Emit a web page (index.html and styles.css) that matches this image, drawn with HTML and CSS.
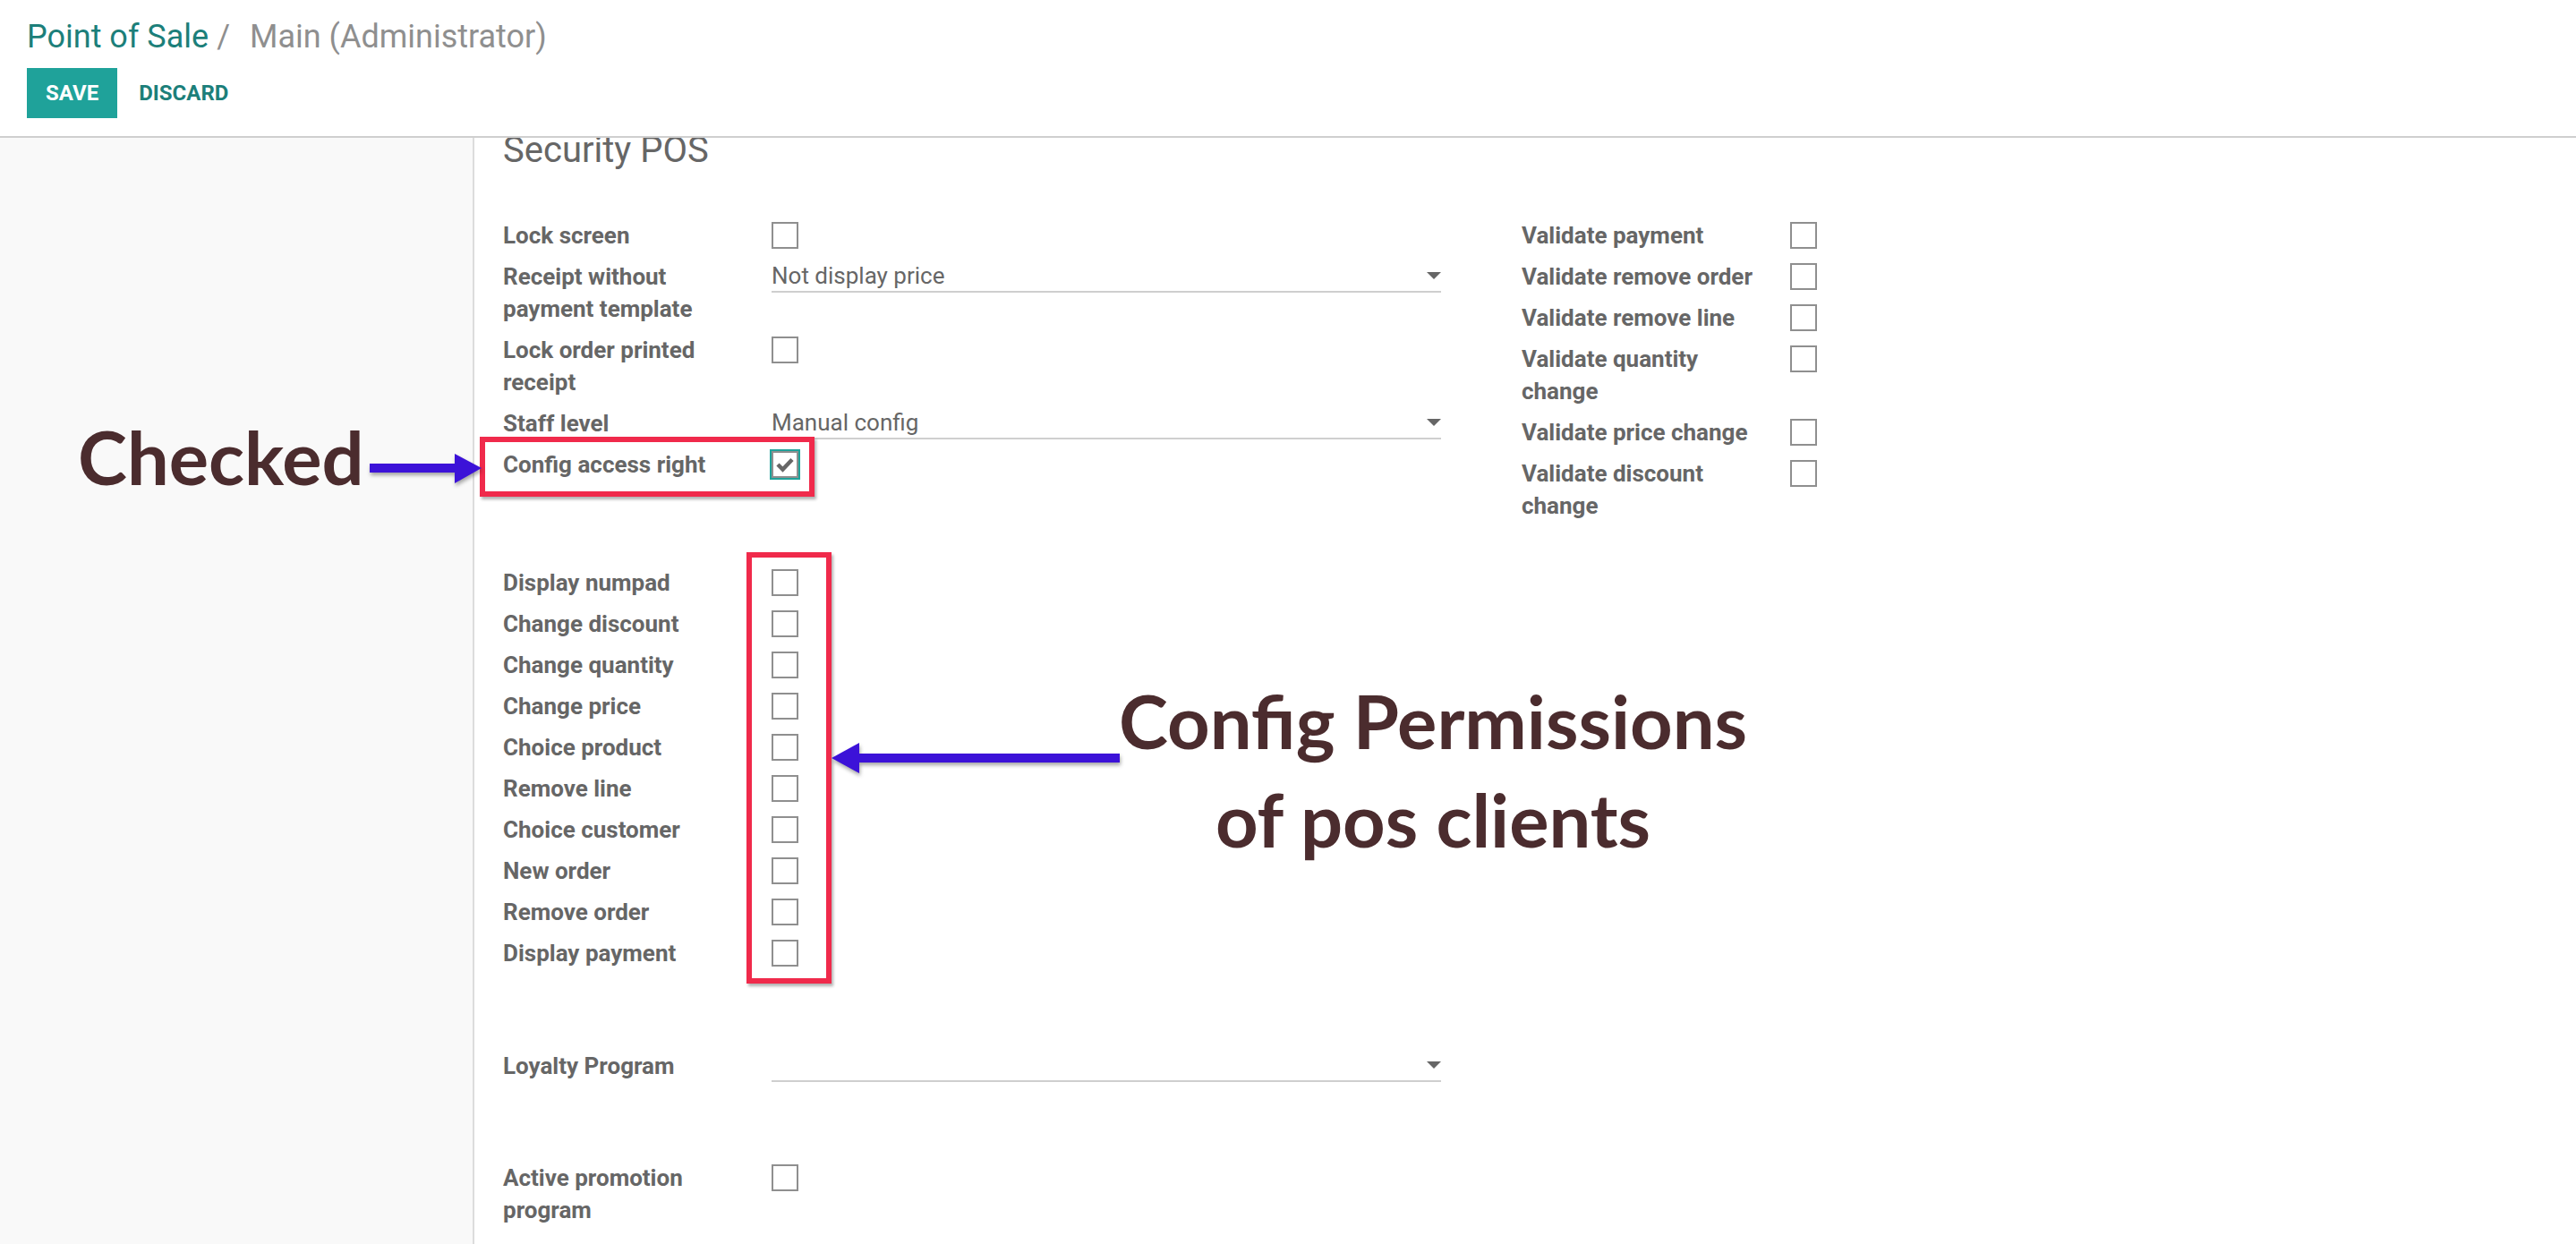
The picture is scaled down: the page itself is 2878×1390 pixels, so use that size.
FILE: index.html
```html
<!DOCTYPE html>
<html lang="en">
<head>
<meta charset="utf-8">
<title>Point of Sale / Main (Administrator)</title>
<link rel="stylesheet" href="styles.css">
</head>
<body>
<div class="page">
  <header class="cp">
    <div class="crumbs"><span class="crumb">Point of Sale</span><span class="sep">/</span><span class="active">Main (Administrator)</span></div>
    <div class="buttons"><button class="btn save">SAVE</button><button class="btn discard">DISCARD</button></div>
  </header>

  <main class="content">
    <div class="gutter"></div>
    <section class="sheet">
      <h2 class="sep-title">Security POS</h2>

      <div class="groups">
        <div class="group">
          <div class="row"><div class="label">Lock screen</div><div class="value"><span class="cb"></span></div></div>
          <div class="row"><div class="label">Receipt without payment template</div><div class="value"><div class="select"><span>Not display price</span><i class="caret"></i></div></div></div>
          <div class="row"><div class="label">Lock order printed receipt</div><div class="value"><span class="cb"></span></div></div>
          <div class="row"><div class="label">Staff level</div><div class="value"><div class="select"><span>Manual config</span><i class="caret"></i></div></div></div>
          <div class="row"><div class="label">Config access right</div><div class="value"><span class="cb checked"><svg viewBox="0 0 26 26" width="26" height="26"><polyline points="5,13 10.5,18.5 21,7.5" fill="none" stroke="#666" stroke-width="4.5"/></svg></span></div></div>
        </div>
        <div class="group">
          <div class="row"><div class="label">Validate payment</div><div class="value"><span class="cb"></span></div></div>
          <div class="row"><div class="label">Validate remove order</div><div class="value"><span class="cb"></span></div></div>
          <div class="row"><div class="label">Validate remove line</div><div class="value"><span class="cb"></span></div></div>
          <div class="row"><div class="label">Validate quantity change</div><div class="value"><span class="cb"></span></div></div>
          <div class="row"><div class="label">Validate price change</div><div class="value"><span class="cb"></span></div></div>
          <div class="row"><div class="label">Validate discount change</div><div class="value"><span class="cb"></span></div></div>
        </div>
      </div>

      <div class="group perms">
        <div class="row"><div class="label">Display numpad</div><div class="value"><span class="cb"></span></div></div>
        <div class="row"><div class="label">Change discount</div><div class="value"><span class="cb"></span></div></div>
        <div class="row"><div class="label">Change quantity</div><div class="value"><span class="cb"></span></div></div>
        <div class="row"><div class="label">Change price</div><div class="value"><span class="cb"></span></div></div>
        <div class="row"><div class="label">Choice product</div><div class="value"><span class="cb"></span></div></div>
        <div class="row"><div class="label">Remove line</div><div class="value"><span class="cb"></span></div></div>
        <div class="row"><div class="label">Choice customer</div><div class="value"><span class="cb"></span></div></div>
        <div class="row"><div class="label">New order</div><div class="value"><span class="cb"></span></div></div>
        <div class="row"><div class="label">Remove order</div><div class="value"><span class="cb"></span></div></div>
        <div class="row"><div class="label">Display payment</div><div class="value"><span class="cb"></span></div></div>
      </div>

      <div class="group loyalty">
        <div class="row"><div class="label">Loyalty Program</div><div class="value"><div class="select"><span></span><i class="caret"></i></div></div></div>
      </div>

      <div class="group promo">
        <div class="row"><div class="label">Active promotion program</div><div class="value"><span class="cb"></span></div></div>
      </div>
    </section>
  </main>

  <div class="note note-checked">Checked</div>
  <div class="note note-perm">Config Permissions<br>of pos clients</div>
  <div class="redbox rb1"></div>
  <div class="redbox rb2"></div>
  <svg class="arrows" width="2878" height="1390" viewBox="0 0 2878 1390">
    <g fill="#3c12d8">
      <rect x="413" y="518" width="98" height="10"/>
      <polygon points="508,507 538,523 508,540"/>
      <rect x="957" y="842" width="294" height="10"/>
      <polygon points="960,830 929,847 960,864"/>
    </g>
  </svg>
</div>
</body>
</html>
```

FILE: styles.css
```css
* { box-sizing: border-box; }
html, body { margin: 0; padding: 0; background: #fff; }
body { font-family: Roboto, "Liberation Sans", Arial, sans-serif; color: #666; }

.page { position: relative; width: 2878px; height: 1390px; overflow: hidden; }

/* control panel */
.cp { height: 154px; padding: 20px 0 0 30px; background: #fff; border-bottom: 2px solid #cfcfcf; }
.crumbs { font-size: 36px; line-height: 42px; white-space: nowrap; }
.crumb { color: #1c7f7a; }
.sep { color: #8f8f8f; padding: 0 22px 0 9px; }
.active { color: #8f8f8f; }
.buttons { display: flex; margin-top: 14px; }
.btn { font-family: Roboto, sans-serif; font-weight: 700; font-size: 24px; height: 56px; line-height: 56px; border: 0; margin: 0; cursor: pointer; }
.save { background: #1fa29a; color: #fff; padding: 0 21px; }
.discard { background: transparent; color: #1c7f7a; padding: 0 20px; margin-left: 4px; }

/* content */
.content { display: flex; height: 1236px; overflow: hidden; }
.gutter { width: 530px; flex: none; background: #f9f9f9; border-right: 2px solid #dcdcdc; }
.sheet { flex: 1; background: #fff; padding-left: 32px; }

.sep-title { margin: -10px 0 53px 0; font-size: 40px; line-height: 48px; font-weight: 400; color: #666; }

.groups { display: grid; grid-template-columns: 1138px 1138px; }
.group { display: flex; flex-direction: column; }
.perms { margin-top: 40px; }
.loyalty { margin-top: 80px; }
.promo { margin-top: 79px; }

.row { display: grid; grid-template-columns: 300px 748px; padding-bottom: 10px; }
.label { font-weight: 700; font-size: 26px; line-height: 36px; padding-right: 32px; color: #666; }
.value { font-size: 26px; line-height: 34px; color: #666; }

.cb { display: block; width: 30px; height: 30px; margin-top: 3px; border: 2px solid #8f8f8f; background: #fff; }
.cb.checked { box-shadow: 0 0 0 2px #1fa29a; display: flex; align-items: center; justify-content: center; }
.cb.checked svg { display: block; }

.select { display: flex; justify-content: space-between; align-items: flex-start; height: 36px; border-bottom: 2px solid #cfcfcf; }
.caret { display: block; margin-top: 13px; width: 0; height: 0; border-left: 8px solid transparent; border-right: 8px solid transparent; border-top: 8px solid #666; }

/* annotations */
.note { position: absolute; font-family: Lato, "Open Sans", sans-serif; font-weight: 700; color: #4b2c2e; font-size: 83px; line-height: 100px; white-space: nowrap; }
.note-checked { left: 87px; top: 460px; }
.note-perm { left: 1201px; top: 750px; width: 800px; text-align: center; line-height: 110px; }

.redbox { position: absolute; border: 6px solid #f02a4b; box-shadow: 2px 3px 3px rgba(0,0,0,0.3); }
.rb1 { left: 536px; top: 488px; width: 374px; height: 67px; }
.rb2 { left: 834px; top: 617px; width: 95px; height: 482px; }

.arrows { position: absolute; left: 0; top: 0; pointer-events: none; filter: drop-shadow(1px 3px 2px rgba(0,0,0,0.35)); }
```
